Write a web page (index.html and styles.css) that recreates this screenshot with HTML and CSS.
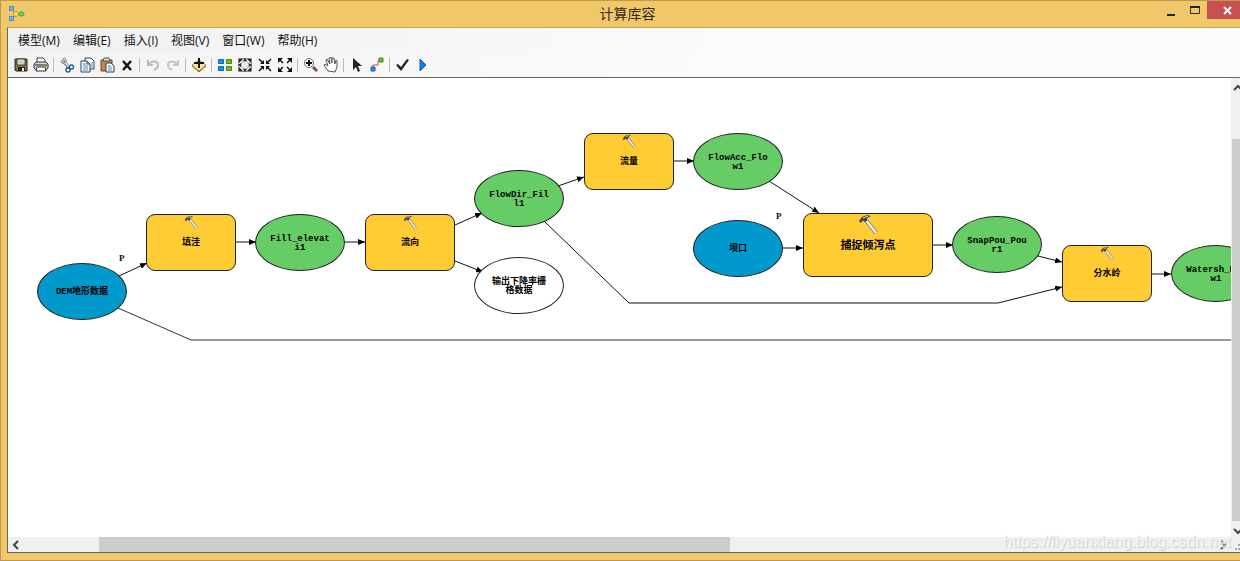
FILE: index.html
```html
<!DOCTYPE html>
<html lang="zh-CN">
<head>
<meta charset="utf-8">
<title>计算库容</title>
<link rel="stylesheet" href="styles.css">
</head>
<body>
<div class="window">
  <header class="titlebar">
    <svg class="app-icon" width="16" height="16" viewBox="0 0 16 16">
      <path d="M3 3l4 5-4 5M7 8h5" fill="none" stroke="#777" />
      <rect x="0.5" y="0.5" width="4" height="4" fill="#6cb4f0" stroke="#4a8fd0"/>
      <rect x="0.5" y="10.5" width="4" height="4" fill="#6cb4f0" stroke="#4a8fd0"/>
      <path d="M4 8l3-3 3 3-3 3z" fill="#ffe63a" stroke="#b89a20"/>
      <ellipse cx="12.5" cy="8" rx="2.5" ry="2" fill="#7bd45c" stroke="#3c9a38"/>
    </svg>
    <h1 class="title">计算库容</h1>
    <div class="controls">
      <button class="ctl min" aria-label="最小化"><svg width="8" height="14"><path d="M0 12h8" stroke="#222" stroke-width="2"/></svg></button>
      <button class="ctl" aria-label="最大化"><svg width="10" height="12" viewBox="0 0 10 12"><path d="M0.5 3v6.5h9V3" fill="none" stroke="#3a2e14"/><path d="M0 3h10" stroke="#222" stroke-width="2"/></svg></button>
      <button class="ctl close" aria-label="关闭"><svg width="9" height="9"><path d="M1 1l7 7M8 1L1 8" stroke="#fff" stroke-width="2"/></svg></button>
    </div>
  </header>
  <main class="client">
    <nav class="menubar">
      <button class="menu">模型(M)</button>
      <button class="menu">编辑(E)</button>
      <button class="menu">插入(I)</button>
      <button class="menu">视图(V)</button>
      <button class="menu">窗口(W)</button>
      <button class="menu">帮助(H)</button>
    </nav>
    <div class="toolbar" role="toolbar">
      <button class="tool" aria-label="保存"><svg class="icon" viewBox="0 0 16 16"><path d="M2 2h12v12H3l-1-1z" fill="#8b7a3c" stroke="#222"/><path d="M4 2h8v6H4z" fill="#f4f4ee" stroke="#333"/><path d="M5 4h6M5 6h6" stroke="#aaa"/><path d="M5 10h7v4H5z" fill="#222"/><path d="M9 11h2v3H9z" fill="#eee"/></svg></button>
      <button class="tool" aria-label="打印"><svg class="icon" viewBox="0 0 16 16"><path d="M4 6V1h6l2 2v3" fill="#fff" stroke="#444"/><path d="M1 7l2-2h10l2 2v4l-2 2H3l-2-2z" fill="#d8d8d8" stroke="#333"/><path d="M2 8h12" stroke="#222"/><path d="M4 10h8l1 4H3z" fill="#fff" stroke="#333"/><path d="M12 9.5h2" stroke="#d49b20" stroke-width="2"/></svg></button>
      <span class="sep"></span>
      <button class="tool" aria-label="剪切"><svg class="icon" viewBox="0 0 16 16"><path d="M5 1l4 10M2 4l9 6" fill="none" stroke="#667" stroke-width="2.5"/><path d="M5 1l4 9M2 4l8 5" stroke="#eee"/><circle cx="12.5" cy="10" r="2" fill="#fff" stroke="#1b6596" stroke-width="1.5"/><circle cx="9" cy="13" r="2" fill="#fff" stroke="#1b6596" stroke-width="1.5"/></svg></button>
      <button class="tool" aria-label="复制"><svg class="icon" viewBox="0 0 16 16"><path d="M6 1h6l3 3v8H6z" fill="#fff" stroke="#345"/><path d="M2 4h6l3 3v8H2z" fill="#f4faff" stroke="#345"/><path d="M8 4v3h3" fill="none" stroke="#345"/><path d="M4 7h3M4 9h5M4 11h5M4 13h5M12 6h2M12 8h2M12 10h2" stroke="#4a91c5"/></svg></button>
      <button class="tool" aria-label="粘贴"><svg class="icon" viewBox="0 0 16 16"><path d="M2 3h11v11H2z" fill="#c78642" stroke="#75451b"/><path d="M5 1h5l1 3H4z" fill="#ddd" stroke="#555"/><path d="M7 6h5l3 3v6H7z" fill="#f4faff" stroke="#345"/><path d="M9 9h3M9 11h4M9 13h4" stroke="#4a91c5"/></svg></button>
      <button class="tool" aria-label="删除"><svg class="icon" viewBox="0 0 16 16"><path d="M4 4l8 9M12 4l-8 9" stroke="#111" stroke-width="2.5"/></svg></button>
      <span class="sep"></span>
      <button class="tool" aria-label="撤消"><svg class="icon" viewBox="0 0 16 16"><path d="M3 3v5h5M4 7c3-4 9-3 9 1 0 3-2 4-4 5" fill="none" stroke="#bbb" stroke-width="2"/></svg></button>
      <button class="tool" aria-label="恢复"><svg class="icon" viewBox="0 0 16 16"><path d="M13 3v5H8M12 7C9 3 3 4 3 8c0 3 2 4 4 5" fill="none" stroke="#c4c4c4" stroke-width="2"/></svg></button>
      <span class="sep"></span>
      <button class="tool" aria-label="添加数据"><svg class="icon" viewBox="0 0 16 16"><path d="M1 8l7-5 7 5-7 6z" fill="#ffe4a0" stroke="#b78b35"/><path d="M1 9l7 6 7-6" fill="none" stroke="#8a6425"/><path d="M8 1v10M3 6h10" stroke="#111" stroke-width="2"/></svg></button>
      <span class="sep"></span>
      <button class="tool" aria-label="自动布局"><svg class="icon" viewBox="0 0 16 16"><path d="M1.5 2.5h5v4h-5zM1.5 9.500h5v4h-5z" fill="#208cf0" stroke="#1360c0"/><path d="M9.5 2.5h5v4h-5zM9.5 9.500h5v4h-5z" fill="#73bd22" stroke="#448515"/></svg></button>
      <button class="tool" aria-label="全图"><svg class="icon" viewBox="0 0 16 16"><path d="M1.5 1.5h13v13h-13z" fill="#fff" stroke="#888"/><circle cx="8" cy="8" r="4" fill="#e0f0f6" stroke="#aaa"/><path d="M8 1l2 3H6zM8 15l2-3H6zM1 8l3-2v4zM15 8l-3-2v4zM2 2h4L2 6zM14 2v4l-4-4zM2 14v-4l4 4zM14 14h-4l4-4z" fill="#222"/></svg></button>
      <button class="tool" aria-label="固定比例放大"><svg class="icon" viewBox="0 0 16 16"><path d="M2 2l4 4M14 2l-4 4M2 14l4-4M14 14l-4-4" stroke="#111" stroke-width="1.5"/><path d="M7 3v4H3zM9 3v4h4zM7 13V9H3zM9 13V9h4z" fill="#111"/></svg></button>
      <button class="tool" aria-label="固定比例缩小"><svg class="icon" viewBox="0 0 16 16"><path d="M2 2l4 4M14 2l-4 4M2 14l4-4M14 14l-4-4" stroke="#111" stroke-width="1.5"/><path d="M1 1h5L1 6zM15 1h-5l5 5zM1 15h5l-5-5zM15 15h-5l5-5z" fill="#111"/></svg></button>
      <span class="sep"></span>
      <button class="tool" aria-label="放大"><svg class="icon" viewBox="0 0 16 16"><path d="M10 10l4 4" stroke="#81523c" stroke-width="3"/><circle cx="6" cy="6" r="4.5" fill="#f5fbff" stroke="#666"/><path d="M6 3v6M3 6h6" stroke="#111" stroke-width="2"/></svg></button>
      <button class="tool" aria-label="平移"><svg class="icon" viewBox="0 0 16 16"><path d="M5 14l-4-6 1-1 3 2-2-6 1-1 3 5-1-6 2-1 1 6V1h2l1 6 1-4 1 1v6l-2 5z" fill="#fff" stroke="#555"/></svg></button>
      <span class="sep"></span>
      <button class="tool" aria-label="选择"><svg class="icon" viewBox="0 0 16 16"><path d="M4 1v12l3-3 2 5 2-1-2-5h4z" fill="#222"/></svg></button>
      <button class="tool" aria-label="连接"><svg class="icon" viewBox="0 0 16 16"><path d="M4 12V8h5V4h3" fill="none" stroke="#c44"/><path d="M2 10h4v4H2z" fill="#208cf0" stroke="#1360c0"/><path d="M10 1h4v4h-4z" fill="#73bd22" stroke="#448515"/></svg></button>
      <span class="sep"></span>
      <button class="tool" aria-label="验证"><svg class="icon" viewBox="0 0 16 16"><path d="M1 8l2-1 3 3 6-8 2 1-8 11z" fill="#222"/></svg></button>
      <button class="tool" aria-label="运行"><svg class="icon" viewBox="0 0 16 16"><path d="M5 2l6 6-6 6z" fill="#1c7de8" stroke="#1358b8"/></svg></button>
    </div>
    <div class="workspace">
      <section class="canvas">
        <svg class="links" width="1300" height="459" viewBox="8 78 1300 459">
          <defs>
            <marker id="arrow" viewBox="0 0 7 6" refX="7" refY="3" markerWidth="7" markerHeight="6" markerUnits="userSpaceOnUse" orient="auto"><path d="M0 0l7 3-7 3z" fill="#000"/></marker>
            <symbol id="hammer" viewBox="0 0 20 20"><path d="M8 6l10 13" stroke="#777" stroke-width="4"/><path d="M8 6l10 13" stroke="#f0eee8" stroke-width="2.5"/><path d="M1 7l3-4 5-2 4 1-4 2v3L6 8 5 6 3 9z" fill="#444"/><path d="M5 4l5-2" stroke="#ddd"/></symbol>
          </defs>
          <g class="arrows">
            <path d="M119 276L147 263"/>
            <path d="M236 242H256"/>
            <path d="M345 242H365"/>
            <path d="M455 225L482 213"/>
            <path d="M455 261L483 272"/>
            <path d="M558 186L584 177"/>
            <path d="M545 222L629 303H998L1062 287"/>
            <path d="M674 161H694"/>
            <path d="M769 181L819 213"/>
            <path d="M782 248H803"/>
            <path d="M933 245H953"/>
            <path d="M1038 256L1062 262"/>
            <path d="M1151 274H1171"/>
          </g>
          <path class="trunk" d="M118 308L191 340H1308"/>
        </svg>
        <div class="node data input dem">DEM地形数据</div>
        <div class="node step fill"><svg class="hammer"><use href="#hammer"/></svg>填洼</div>
        <div class="node data fill-out">Fill_elevat<br>i1</div>
        <div class="node step dir"><svg class="hammer"><use href="#hammer"/></svg>流向</div>
        <div class="node data dir-out">FlowDir_Fil<br>l1</div>
        <div class="node data blank drop-out">输出下降率栅<br>格数据</div>
        <div class="node step acc"><svg class="hammer"><use href="#hammer"/></svg>流量</div>
        <div class="node data acc-out">FlowAcc_Flo<br>w1</div>
        <div class="node data input dam">坝口</div>
        <div class="node step snap"><svg class="hammer"><use href="#hammer"/></svg>捕捉倾泻点</div>
        <div class="node data snap-out">SnapPou_Pou<br>r1</div>
        <div class="node step shed"><svg class="hammer"><use href="#hammer"/></svg>分水岭</div>
        <div class="node data shed-out">Watersh_Flo<br>w1</div>
        <span class="param param-dem">P</span>
        <span class="param param-dam">P</span>
      </section>
      <div class="vscroll">
        <button class="arrow" aria-label="向上滚动"><svg width="10" height="8"><path d="M1 6l4-4 4 4" class="chevron"/></svg></button>
        <div class="vthumb"></div>
        <button class="arrow" aria-label="向下滚动"><svg width="10" height="8"><path d="M1 2l4 4 4-4" class="chevron"/></svg></button>
      </div>
      <div class="hscroll">
        <button class="arrow" aria-label="向左滚动"><svg width="8" height="10"><path d="M6 1L2 5l4 4" class="chevron"/></svg></button>
        <div class="htrack"><div class="hthumb"></div></div>
        <button class="arrow" aria-label="向右滚动"><svg width="8" height="10"><path d="M2 1l4 4-4 4" class="chevron"/></svg></button>
      </div>
      <svg class="grip" width="9" height="15"><path d="M7 8h2M4 12h2M7 12h2" stroke="#aaa" stroke-width="2"/></svg>
      <span class="watermark">https://liyuanxiang.blog.csdn.net</span>
    </div>
  </main>
</div>
</body>
</html>
```

FILE: styles.css
```css
* { box-sizing: border-box; }
body { margin: 0; font-family: "Open Sans", "Noto Sans CJK SC", sans-serif; font-size: 12px; color: #111; }
button { border: 0; padding: 0; background: none; font: inherit; color: inherit; }
svg { display: block; }

.window {
  height: 100vh;
  display: flex;
  flex-direction: column;
  background: #f0c869;
  border: solid #bd9a4e;
  border-width: 1px 0 1px 1px;
  padding: 0 0 7px 6px;
  overflow: hidden;
}
.titlebar { display: grid; height: 26px; flex: none; }
.titlebar > * { grid-area: 1 / 1; }
.app-icon { margin: 5px 0 0 2px; }
.title { margin: 0; padding-left: 8px; text-align: center; font-size: 14px; line-height: 26px; font-weight: 400; color: #332a18; }
.controls { justify-self: end; display: flex; align-items: flex-start; height: 18px; }
.ctl { width: 25px; height: 18px; display: flex; align-items: center; justify-content: center; }
.min { padding-left: 3px; }
.close { width: 33px; padding-left: 8px; background: #c75050; }

.client { flex: 1; min-height: 0; display: flex; flex-direction: column; background: #f0f0f0; border: solid #666; border-width: 0 0 1px 1px; border-top: 1px solid #c9a34f; }
.menubar { display: flex; height: 25px; flex: none; padding-left: 10px; gap: 13px; background: linear-gradient(90deg, #f0f0f0, #fbfbfb 60%); }
.menu { line-height: 25px; white-space: nowrap; }
.toolbar { display: flex; align-items: center; height: 24px; flex: none; padding-left: 3px; background: linear-gradient(90deg, #f3f3f3, #fbfbfb 60%); }
.tool { width: 20px; height: 20px; display: grid; place-items: center; }
.icon { width: 16px; height: 16px; }
.sep { width: 1px; height: 14px; margin: 0 3px 0 2px; background: #bbb; }

.workspace { position: relative; flex: 1; min-height: 0; display: grid; grid-template: minmax(0, 1fr) 15px / minmax(0, 1fr) 9px; border-top: 1px solid #666; }
.canvas { position: relative; overflow: hidden; background: #fff; }
.links { position: absolute; left: 0; top: 0; }
.arrows path { fill: none; stroke: #111; marker-end: url(#arrow); }
.trunk { fill: none; stroke: #333; }

.node {
  position: absolute;
  width: 90px;
  height: 57px;
  padding-top: 2px;
  display: flex;
  align-items: center;
  justify-content: center;
  text-align: center;
  border: 1px solid #222;
  font: bold 9px/9px "Liberation Mono", "Noto Sans CJK SC", monospace;
  color: #000;
  white-space: nowrap;
}
.data { border-radius: 50%; background: #66cc66; }
.input { background: #0099cc; }
.blank { background: #fff; }
.step { border-radius: 9px; background: #ffcc33; }
.hammer { position: absolute; left: 37px; top: 0; width: 14px; height: 14px; }
.dem { left: 29px; top: 185px; }
.fill { left: 138px; top: 136px; }
.fill-out { left: 247px; top: 136px; }
.dir { left: 357px; top: 136px; }
.dir-out { left: 466px; top: 92px; }
.drop-out { left: 466px; top: 179px; }
.acc { left: 576px; top: 55px; }
.acc-out { left: 685px; top: 55px; }
.dam { left: 685px; top: 142px; }
.snap { left: 795px; top: 135px; width: 130px; height: 64px; font-size: 11px; }
.snap .hammer { left: 54px; width: 20px; height: 20px; }
.snap-out { left: 944px; top: 138px; }
.shed { left: 1054px; top: 167px; }
.shed-out { left: 1163px; top: 167px; }
.param { position: absolute; font: bold 9px/10px "Liberation Serif", serif; }
.param-dem { left: 111px; top: 175px; }
.param-dam { left: 768px; top: 133px; }

.vscroll { display: flex; flex-direction: column; padding-left: 1px; background: #f0f0f0; overflow: hidden; }
.vscroll .arrow { height: 16px; flex: none; padding: 4px 0 0 1px; }
.vthumb { flex: 1; margin-top: 45px; background: #cdcdcd; }
.hscroll { display: flex; background: #f0f0f0; }
.hscroll .arrow { width: 16px; display: grid; place-items: center; }
.htrack { flex: 1; }
.hthumb { width: 53%; height: 100%; margin-left: 6.3%; background: #cdcdcd; }
.chevron { fill: none; stroke: #444; stroke-width: 2; }
.watermark { position: absolute; right: 9px; bottom: 0; font: 16px/20px "Liberation Sans", sans-serif; color: rgba(250, 250, 250, 0.8); text-shadow: 1px 1px 1px #ccc; }
```
